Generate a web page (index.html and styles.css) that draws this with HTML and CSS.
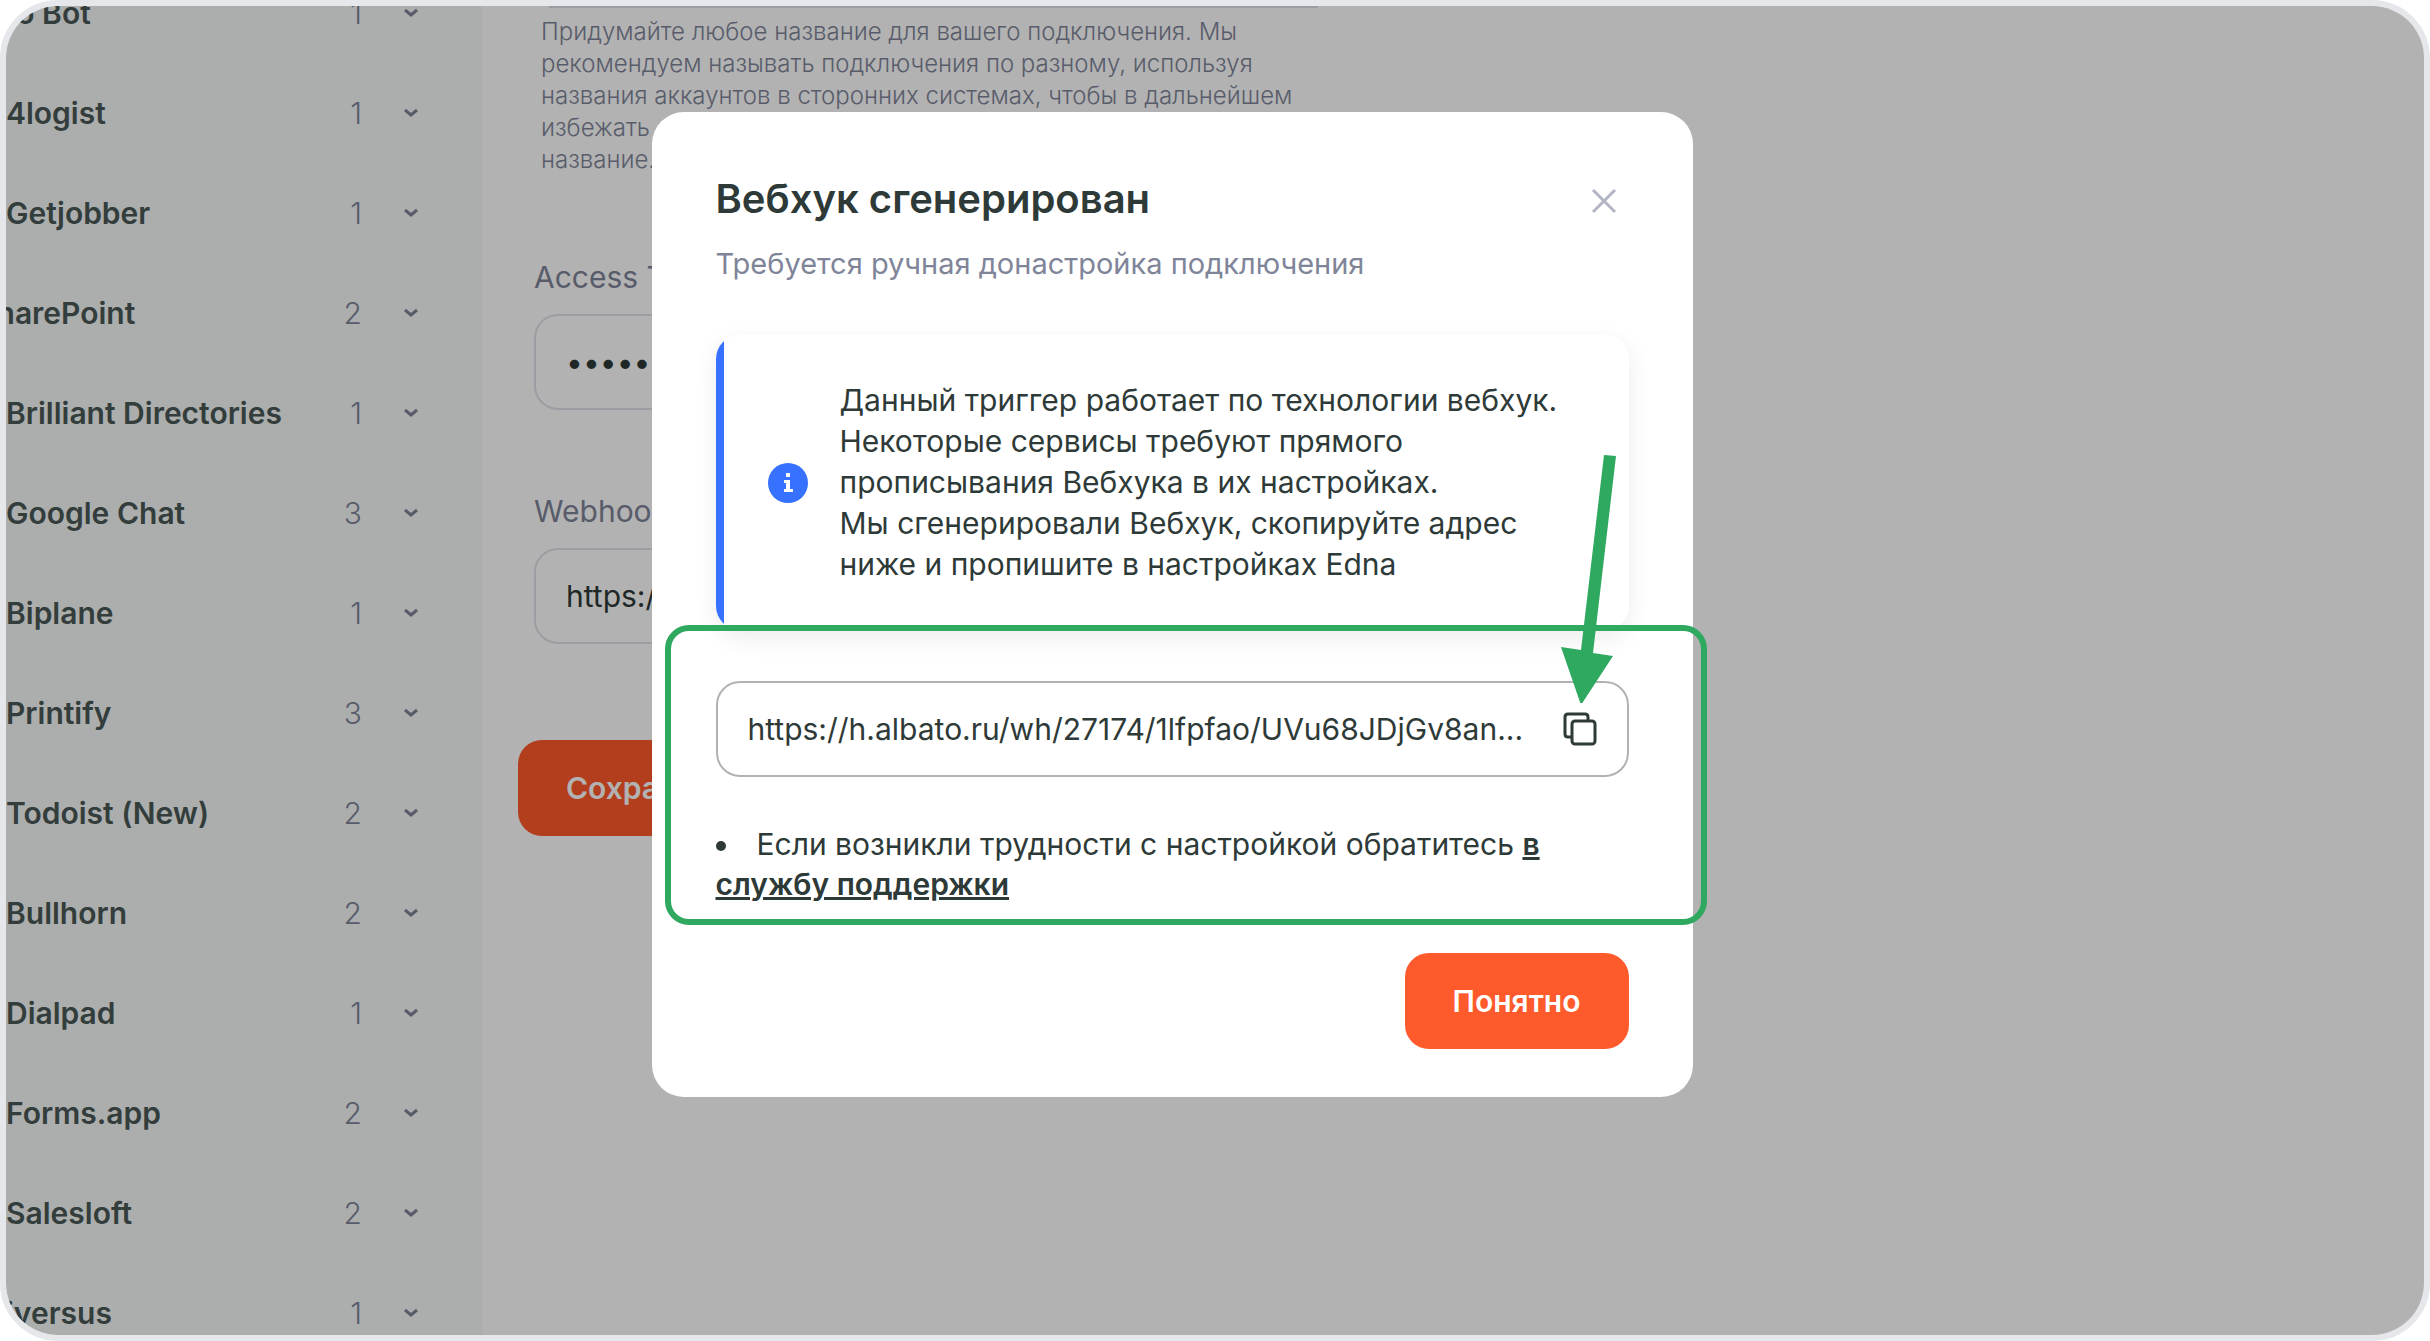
FILE: index.html
```html
<!DOCTYPE html>
<html lang="ru">
<head>
<meta charset="utf-8">
<title>Вебхук сгенерирован</title>
<link rel="stylesheet" href="styles.css">
</head>
<body>
<div class="frame">
  <nav class="sidebar" aria-label="Сервисы">
    <ul class="services">
      <li class="service"><span class="service-name">to Bot</span><span class="service-count">1</span><svg class="chevron" viewBox="0 0 16 16"><path d="M2 5l6 5 6-5"/></svg></li>
      <li class="service"><span class="service-name">4logist</span><span class="service-count">1</span><svg class="chevron" viewBox="0 0 16 16"><path d="M2 5l6 5 6-5"/></svg></li>
      <li class="service"><span class="service-name">Getjobber</span><span class="service-count">1</span><svg class="chevron" viewBox="0 0 16 16"><path d="M2 5l6 5 6-5"/></svg></li>
      <li class="service"><span class="service-name service-name-long">SharePoint</span><span class="service-count">2</span><svg class="chevron" viewBox="0 0 16 16"><path d="M2 5l6 5 6-5"/></svg></li>
      <li class="service"><span class="service-name">Brilliant Directories</span><span class="service-count">1</span><svg class="chevron" viewBox="0 0 16 16"><path d="M2 5l6 5 6-5"/></svg></li>
      <li class="service"><span class="service-name">Google Chat</span><span class="service-count">3</span><svg class="chevron" viewBox="0 0 16 16"><path d="M2 5l6 5 6-5"/></svg></li>
      <li class="service"><span class="service-name">Biplane</span><span class="service-count">1</span><svg class="chevron" viewBox="0 0 16 16"><path d="M2 5l6 5 6-5"/></svg></li>
      <li class="service"><span class="service-name">Printify</span><span class="service-count">3</span><svg class="chevron" viewBox="0 0 16 16"><path d="M2 5l6 5 6-5"/></svg></li>
      <li class="service"><span class="service-name">Todoist (New)</span><span class="service-count">2</span><svg class="chevron" viewBox="0 0 16 16"><path d="M2 5l6 5 6-5"/></svg></li>
      <li class="service"><span class="service-name">Bullhorn</span><span class="service-count">2</span><svg class="chevron" viewBox="0 0 16 16"><path d="M2 5l6 5 6-5"/></svg></li>
      <li class="service"><span class="service-name">Dialpad</span><span class="service-count">1</span><svg class="chevron" viewBox="0 0 16 16"><path d="M2 5l6 5 6-5"/></svg></li>
      <li class="service"><span class="service-name">Forms.app</span><span class="service-count">2</span><svg class="chevron" viewBox="0 0 16 16"><path d="M2 5l6 5 6-5"/></svg></li>
      <li class="service"><span class="service-name">Salesloft</span><span class="service-count">2</span><svg class="chevron" viewBox="0 0 16 16"><path d="M2 5l6 5 6-5"/></svg></li>
      <li class="service"><span class="service-name">iversus</span><span class="service-count">1</span><svg class="chevron" viewBox="0 0 16 16"><path d="M2 5l6 5 6-5"/></svg></li>
    </ul>
  </nav>

  <main class="content">
    <form class="form">
      <p class="hint">Придумайте любое название для вашего подключения. Мы рекомендуем называть подключения по разному, используя названия аккаунтов в сторонних системах, чтобы в дальнейшем избежать<br>название.</p>
      <div class="field">
        <label for="token">Access Token</label>
        <input class="input" id="token" type="password" value="12345">
      </div>
      <div class="field">
        <label for="webhook">Webhook</label>
        <input class="input" id="webhook" type="text" value="https://">
      </div>
      <button class="button save" type="button">Сохранить</button>
    </form>
  </main>

  <div class="backdrop">
    <section class="modal" role="dialog" aria-labelledby="modal-title">
      <header class="modal-head">
        <h1 class="modal-title" id="modal-title">Вебхук сгенерирован</h1>
        <button class="icon-button close" type="button" aria-label="Закрыть"><svg viewBox="0 0 28 28"><path d="M3 3l22 22M25 3L3 25"/></svg></button>
      </header>
      <p class="modal-subtitle">Требуется ручная донастройка подключения</p>

      <div class="notice">
        <svg class="info" viewBox="0 0 40 40"><circle cx="20" cy="20" r="20"/><path d="M18 10h4v4h-4zM16 17h6v9h3v3h-9v-3h2v-6h-2z"/></svg>
        <p class="notice-text">Данный триггер работает по технологии вебхук.<br>Некоторые сервисы требуют прямого<br>прописывания Вебхука в их настройках.<br>Мы сгенерировали Вебхук, скопируйте адрес<br>ниже и пропишите в настройках Edna</p>
      </div>

      <div class="copy-field">
        <span class="copy-url">https://h.albato.ru/wh/27174/1lfpfao/UVu68JDjGv8an...</span>
        <button class="icon-button copy" type="button" aria-label="Скопировать"><svg viewBox="0 0 34 34"><path d="M8 25H5q-3 0-3-3V5q0-3 3-3h17q3 0 3 3v3"/><rect x="9" y="9" width="23" height="23" rx="3"/></svg></button>
      </div>

      <ul class="help">
        <li>Если возникли трудности с настройкой обратитесь <a href="#">в службу поддержки</a></li>
      </ul>

      <button class="button confirm" type="button">Понятно</button>

      <div class="highlight"></div>
      <svg class="arrow" viewBox="0 0 60 252"><path d="M45 4l12 1-23 197 20 3-32 49L2 196l20 3z"/></svg>
    </section>
  </div>
</div>
</body>
</html>
```
FILE: styles.css
```css
* {
  box-sizing: border-box;
}

body {
  margin: 0;
  background: #fff;
  color: #2e3a38;
  font: 400 30px/40px Inter, "Noto Sans", sans-serif;
}

.frame {
  position: relative;
  display: flex;
  height: 100vh;
  overflow: hidden;
  border: 6px solid #e5e7eb;
  border-radius: 58px;
}

.sidebar {
  flex: 0 0 476px;
  background: #f7faf9;
}

.services {
  margin: -43px 0 0;
  padding: 0;
  list-style: none;
}

.service {
  display: flex;
  align-items: center;
  height: 100px;
  padding-right: 63px;
}

.service-name {
  flex: 1;
  color: #4a5856;
  font-weight: 600;
  white-space: nowrap;
}

.service-name-long {
  margin-left: -29px;
}

.service-count {
  color: #7f8599;
  font-weight: 300;
}

.chevron {
  width: 16px;
  height: 16px;
  margin-left: 41px;
  fill: none;
  stroke: #7f8599;
  stroke-width: 3;
}

.content {
  flex: 1;
}

.form {
  display: flex;
  flex-direction: column;
  width: 860px;
  padding: 0 0 0 36px;
}

.hint {
  margin: 0 0 81px 16px;
  padding-left: 7px;
  color: #7f8599;
  font-size: 24px;
  font-weight: 300;
  line-height: 32px;
}

/* Lower edge of the name field that is scrolled out of view */
.hint::before {
  content: "";
  display: block;
  height: 2px;
  margin: 0 24px 8px 8px;
  background: #dfe1e8;
}

.field {
  display: flex;
  flex-direction: column;
  gap: 17px;
  margin-bottom: 81px;
  padding-left: 16px;
}

.field label {
  color: #7f8599;
}

.input {
  width: 100%;
  height: 96px;
  padding: 0 30px;
  border: 2px solid #dfe1e8;
  border-radius: 24px;
  background: none;
  color: #2e3a38;
  font: inherit;
}

.button {
  height: 96px;
  padding: 0 48px;
  border: 0;
  border-radius: 24px;
  background: #ff5a2c;
  color: #fff;
  font: inherit;
  font-weight: 600;
}

.save {
  align-self: flex-start;
  margin-top: 15px;
}

.backdrop {
  position: absolute;
  inset: 0;
  display: flex;
  justify-content: center;
  align-items: flex-start;
  padding-top: 106px;
  padding-right: 86px;
  background: rgba(0, 0, 0, 0.3);
}

.modal {
  position: relative;
  display: flex;
  flex-direction: column;
  width: 1041px;
  padding: 62px 64px 48px;
  border-radius: 32px;
  background: #fff;
}

.modal-head {
  display: flex;
  justify-content: space-between;
  align-items: center;
}

.modal-title {
  margin: 0;
  font-size: 40px;
  line-height: 50px;
  font-weight: 600;
}

.icon-button {
  display: flex;
  padding: 0;
  border: 0;
  background: none;
  color: inherit;
}

.icon-button svg {
  width: 100%;
  fill: none;
  stroke: currentColor;
  stroke-width: 3;
}

.close {
  width: 28px;
  margin-top: 4px;
  margin-right: 11px;
  color: #b2b6c4;
}

.modal-subtitle {
  margin: 20px 0 51px;
  color: #7f8599;
  font-size: 29px;
}

.notice {
  display: flex;
  align-items: center;
  gap: 32px;
  padding: 45px 0 45px 52px;
  border-radius: 24px;
  background: linear-gradient(#3771ff, #3771ff) left / 8px 100% no-repeat;
  box-shadow: 0 8px 24px rgba(0, 0, 0, 0.08);
}

.info {
  flex: none;
  width: 40px;
  fill: #3771ff;
}

.info path {
  fill: #fff;
}

.notice-text {
  margin: 0;
  line-height: 41px;
}

.copy-field {
  display: flex;
  align-items: center;
  justify-content: space-between;
  height: 96px;
  margin-top: 51px;
  padding: 0 30px;
  border: 2px solid #b2b2b2;
  border-radius: 24px;
}

.copy {
  width: 34px;
}

.help {
  margin: 47px 0 49px;
  padding: 0;
  list-style-position: inside;
}

.help a {
  color: inherit;
  font-weight: 600;
}

.confirm {
  align-self: flex-end;
}

/* Annotations drawn over the dialog */
.highlight {
  position: absolute;
  top: 513px;
  left: 13px;
  width: 1042px;
  height: 300px;
  border: 6px solid #2fa860;
  border-radius: 24px;
}

.arrow {
  position: absolute;
  top: 339px;
  left: 907px;
  width: 60px;
  fill: #2fa860;
}
```
